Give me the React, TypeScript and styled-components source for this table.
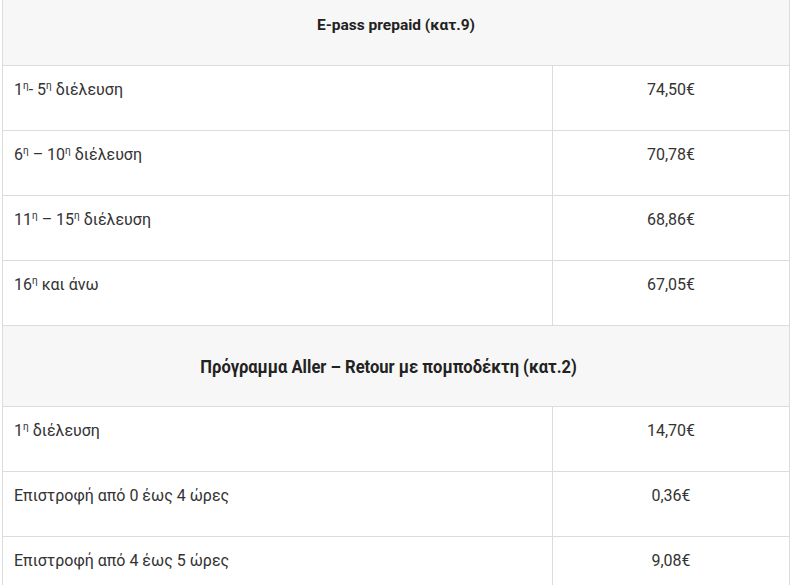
import React from "react";
import styled, { createGlobalStyle } from "styled-components";

const Global = createGlobalStyle`
  html, body { margin: 0; padding: 0; background: #ffffff; overflow: hidden; }
  body { font-family: Roboto, "Noto Sans", "Liberation Sans", sans-serif; color: #333333; }
`;

const Page = styled.div`
  padding-left: 2px;
  margin-top: -15px;
  width: 788px;
`;

const Table = styled.table`
  width: 100%;
  border-collapse: collapse;
  table-layout: fixed;
  border-left: 1px solid #dcdcdc;
  border-right: 1px solid #dcdcdc;
`;

const HeadCell = styled.td<{ $shift?: number }>`
  background: #f7f7f7;
  height: 80px;
  padding: 0 ${(p) => 12 + (p.$shift ?? 0)}px 0 12px;
  text-align: center;
  vertical-align: middle;
  font-weight: 700;
  font-size: 15.5px;
  color: #222222;
  border-bottom: 1px solid #dcdcdc;
`;

const Cell = styled.td<{ $center?: boolean }>`
  height: 65px;
  box-sizing: border-box;
  padding: 13px 11px 0 11px;
  vertical-align: top;
  line-height: 22px;
  font-size: 16px;
  color: #333333;
  text-align: ${(p) => (p.$center ? "center" : "left")};
  border-bottom: 1px solid #dcdcdc;
  & + & {
    border-left: 1px solid #dcdcdc;
  }
`;

const Sup = styled.sup`
  font-size: 10px;
  line-height: 0;
  vertical-align: 6px;
`;

const Narrow = styled.span`
  display: inline-block;
  font-size: 18px;
  transform: scaleX(0.92);
`;

type Row = { label: React.ReactNode; value: string };

const rows1: Row[] = [
  { label: <>1<Sup>η</Sup>- 5<Sup>η</Sup> διέλευση</>, value: "74,50€" },
  { label: <>6<Sup>η</Sup> – 10<Sup>η</Sup> διέλευση</>, value: "70,78€" },
  { label: <>11<Sup>η</Sup> – 15<Sup>η</Sup> διέλευση</>, value: "68,86€" },
  { label: <>16<Sup>η</Sup> και άνω</>, value: "67,05€" },
];

const rows2: Row[] = [
  { label: <>1<Sup>η</Sup> διέλευση</>, value: "14,70€" },
  { label: "Επιστροφή από 0 έως 4 ώρες", value: "0,36€" },
  { label: "Επιστροφή από 4 έως 5 ώρες", value: "9,08€" },
];

export default function App() {
  return (
    <>
      <Global />
      <Page>
        <Table>
          <colgroup>
            <col style={{ width: "550px" }} />
            <col />
          </colgroup>
          <tbody>
            <tr>
              <HeadCell colSpan={2}>E-pass prepaid (κατ.9)</HeadCell>
            </tr>
            {rows1.map((r, i) => (
              <tr key={"a" + i}>
                <Cell>{r.label}</Cell>
                <Cell $center>{r.value}</Cell>
              </tr>
            ))}
            <tr>
              <HeadCell colSpan={2} $shift={14}>
                <Narrow>Πρόγραμμα Aller – Retour με πομποδέκτη (κατ.2)</Narrow>
              </HeadCell>
            </tr>
            {rows2.map((r, i) => (
              <tr key={"b" + i}>
                <Cell>{r.label}</Cell>
                <Cell $center>{r.value}</Cell>
              </tr>
            ))}
          </tbody>
        </Table>
      </Page>
    </>
  );
}
